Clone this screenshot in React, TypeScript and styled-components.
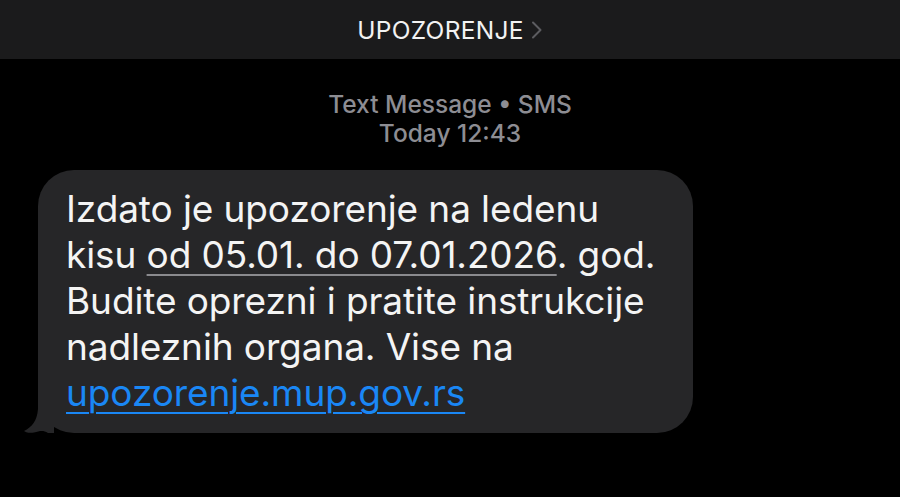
import React from "react";
import styled, { createGlobalStyle } from "styled-components";

const GlobalStyle = createGlobalStyle`
  html, body {
    margin: 0;
    padding: 0;
    background: #000;
  }
  body {
    font-family: Inter, "Noto Sans", "Liberation Sans", sans-serif;
    -webkit-font-smoothing: antialiased;
  }
`;

const Screen = styled.div`
  width: 900px;
  height: 497px;
  background: #000;
  overflow: hidden;
  display: flex;
  flex-direction: column;
`;

const Header = styled.header`
  height: 59px;
  flex-shrink: 0;
  background: #1b1b1c;
  display: flex;
  align-items: center;
  justify-content: center;
  gap: 7px;
`;

const Title = styled.span`
  color: #f2f2f2;
  font-size: 24.5px;
  font-weight: 400;
  letter-spacing: 0.3px;
`;

const Chevron = styled.svg`
  width: 12px;
  height: 18px;
  margin-top: 1px;
`;

const Meta = styled.div`
  margin-top: 31px;
  text-align: center;
  color: #8d8d93;
  font-size: 24.5px;
  line-height: 29px;
  font-weight: 500;
`;

const Thread = styled.div`
  padding: 22px 0 0 38px;
`;

const Bubble = styled.div`
  position: relative;
  width: 655px;
  box-sizing: border-box;
  background: #262628;
  border-radius: 36px;
  padding: 16px 20px 17px 28px;
  color: #f4f4f4;
  font-size: 37px;
  line-height: 46px;
  letter-spacing: -0.1px;
`;

const Tail = styled.svg`
  position: absolute;
  left: -14px;
  bottom: 0;
  width: 40px;
  height: 40px;
`;

const DateMark = styled.span`
  text-decoration: underline;
  text-decoration-color: #8a8a8e;
  text-decoration-thickness: 2px;
  text-underline-offset: 6px;
`;

const Link = styled.a`
  color: #1a87f5;
  text-decoration: underline;
  text-decoration-thickness: 2px;
  text-underline-offset: 6px;
`;

export default function App() {
  return (
    <>
      <GlobalStyle />
      <Screen>
        <Header>
          <Title>UPOZORENJE</Title>
          <Chevron viewBox="0 0 12 18">
            <path d="M2 1.5 L9.5 9 L2 16.5" fill="none" stroke="#5c5c60" strokeWidth="2" strokeLinecap="round" strokeLinejoin="round" />
          </Chevron>
        </Header>
        <Meta>
          Text Message • SMS
          <br />
          Today 12:43
        </Meta>
        <Thread>
          <Bubble>
            <Tail viewBox="0 0 40 40">
              <path d="M14 0 L30 0 L30 40 L24 40 C19 37 16 38 10 39.5 C5 40.5 1 39 0 38 C8 34 13 28 14 16 Z" fill="#262628" />
            </Tail>
            Izdato je upozorenje na ledenu kisu <DateMark>od 05.01. do 07.01.2026</DateMark>. god. Budite oprezni i pratite instrukcije nadleznih organa. Vise na{" "}
            <Link href="#">upozorenje.mup.gov.rs</Link>
          </Bubble>
        </Thread>
      </Screen>
    </>
  );
}
